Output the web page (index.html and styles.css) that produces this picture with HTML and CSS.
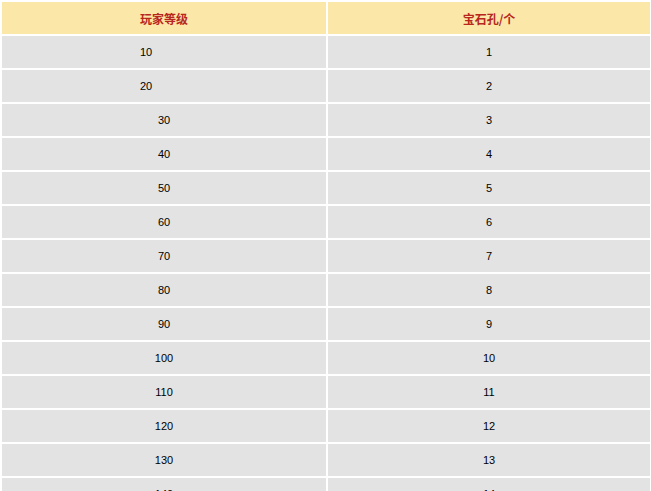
FILE: index.html
```html
<!DOCTYPE html>
<html lang="zh">
<head>
<meta charset="utf-8">
<title>宝石孔</title>
<link rel="stylesheet" href="styles.css">
</head>
<body>
<table class="gem-table">
  <thead>
    <tr><th class="col-level">玩家等级</th><th class="col-slots">宝石孔/个</th></tr>
  </thead>
  <tbody>
    <tr><td class="shift">10</td><td>1</td></tr>
    <tr><td class="shift">20</td><td>2</td></tr>
    <tr><td>30</td><td>3</td></tr>
    <tr><td>40</td><td>4</td></tr>
    <tr><td>50</td><td>5</td></tr>
    <tr><td>60</td><td>6</td></tr>
    <tr><td>70</td><td>7</td></tr>
    <tr><td>80</td><td>8</td></tr>
    <tr><td>90</td><td>9</td></tr>
    <tr><td>100</td><td>10</td></tr>
    <tr><td>110</td><td>11</td></tr>
    <tr><td>120</td><td>12</td></tr>
    <tr><td>130</td><td>13</td></tr>
    <tr><td>140</td><td>14</td></tr>
    <tr><td>150</td><td>15</td></tr>
  </tbody>
</table>
</body>
</html>
```
FILE: styles.css
```css
html, body {
  margin: 0;
  padding: 0;
  overflow: hidden;
  background: #ffffff;
}
.gem-table {
  border-collapse: separate;
  border-spacing: 2px;
  width: 652px;
  table-layout: fixed;
  font-family: "Liberation Sans", Arial, "Noto Sans CJK SC", sans-serif;
  font-size: 11px;
  color: #000;
}
.gem-table th,
.gem-table td {
  height: 32px;
  padding: 0;
  text-align: center;
  vertical-align: middle;
  box-sizing: border-box;
}
.gem-table th {
  background: #fbe8a9;
  color: #b8261c;
  font-family: "Noto Sans CJK SC", "Liberation Sans", sans-serif;
  font-size: 12px;
  font-weight: bold;
}
.gem-table td {
  background: #e3e3e3;
}
.col-level { width: 324px; }
.col-slots { width: 322px; }
.gem-table td.shift {
  padding-right: 36px;
}
```
